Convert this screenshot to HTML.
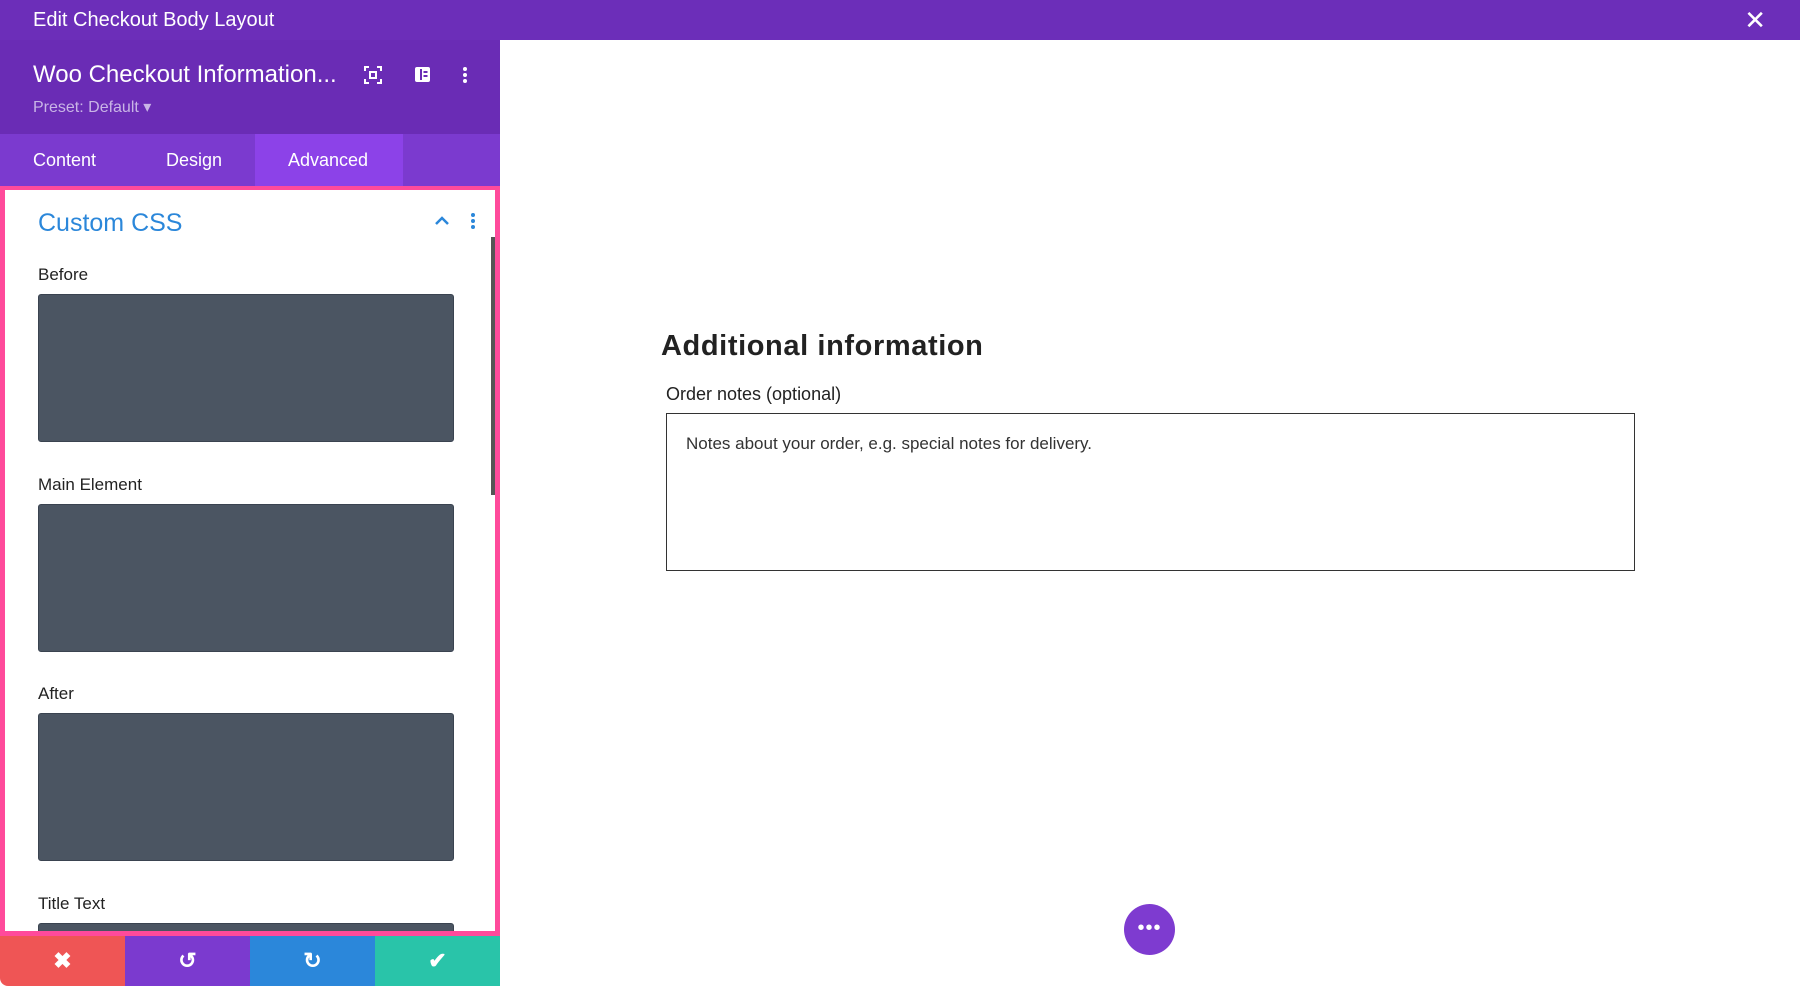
<!DOCTYPE html>
<html style="overflow:hidden;height:986px"><head><meta charset="utf-8"><style>
*{box-sizing:border-box;margin:0;padding:0}
body{width:1800px;height:986px;overflow:hidden;background:#fff;font-family:"Liberation Sans",sans-serif;position:relative}
.top{position:absolute;left:0;top:0;width:1800px;height:40px;background:#6c2eb9;color:#fff;font-size:20px;line-height:40px;padding-left:33px}
.close{position:absolute;right:34px;top:0;font-size:26px;color:#fff}
.hdr{position:absolute;left:0;top:40px;width:500px;height:94px;background:#6a2cb5;color:#fff}
.hdr .t{position:absolute;left:33px;top:21px;font-size:24px}
.hdr .p{position:absolute;left:33px;top:57px;font-size:16px;color:#c9b5e6}
.tabs{position:absolute;left:0;top:134px;width:500px;height:52px;background:#7b3acf;color:#fff;font-size:18px}
.tabs span{position:absolute;top:16px}
.tabs .act{position:absolute;left:255px;top:0;width:148px;height:52px;background:#8c42e8}
.panel{position:absolute;left:0;top:186px;width:500px;height:750px;border:5px solid #ff4a9b;border-top-width:4px;background:#fff;overflow:hidden}
.cc{position:absolute;left:33px;top:19px;font-size:25px;color:#2b87da}
.lbl{position:absolute;left:33px;font-size:17px;color:#222}
.box{position:absolute;left:33px;width:416px;height:148px;background:#4b5562;border:1px solid #3a4350;border-radius:3px}
.sb{position:absolute;left:486px;top:47px;width:4px;height:258px;background:#555}
.btns{position:absolute;left:0;top:936px;width:500px;height:50px;display:flex}
.btns div{flex:1;display:flex;align-items:center;justify-content:center;color:#fff;font-size:22px;font-weight:bold}
h2{position:absolute;left:661px;top:330px;font-size:29px;font-weight:bold;color:#222;letter-spacing:0.6px}
.on{position:absolute;left:666px;top:384px;font-size:18px;color:#222}
.ta{position:absolute;left:666px;top:413px;width:969px;height:158px;border:1px solid #333}
.ta span{position:absolute;left:19px;top:20px;font-size:17px;color:#333}
.fab{position:absolute;left:1124px;top:904px;width:51px;height:51px;border-radius:50%;background:#7e3bd0;color:#fff;text-align:center;font-size:20px;line-height:48px;letter-spacing:1px}
</style></head><body>
<div class="top">Edit Checkout Body Layout<span class="close">✕</span></div>
<div class="hdr"><div class="t">Woo Checkout Information...</div>
<svg style="position:absolute;left:364px;top:26px" width="18" height="18" viewBox="0 0 18 18" fill="none" stroke="#fff" stroke-width="2"><path d="M1 5V1h4M13 1h4v4M17 13v4h-4M5 17H1v-4"/><rect x="6" y="6" width="6" height="6"/></svg>
<svg style="position:absolute;left:414px;top:26px" width="17" height="17" viewBox="0 0 17 17"><rect x="1" y="1" width="15" height="15" rx="2" fill="#fff"/><rect x="6" y="3" width="2" height="11" fill="#6a2cb5"/><rect x="9.5" y="5" width="4" height="2" fill="#6a2cb5"/><rect x="9.5" y="9" width="4" height="2" fill="#6a2cb5"/></svg>
<svg style="position:absolute;left:462px;top:26px" width="6" height="18"><circle cx="3" cy="3" r="2" fill="#fff"/><circle cx="3" cy="9" r="2" fill="#fff"/><circle cx="3" cy="15" r="2" fill="#fff"/></svg>
<div class="p">Preset: Default ▾</div></div>
<div class="tabs"><div class="act"></div><span style="left:33px">Content</span><span style="left:166px">Design</span><span style="left:288px">Advanced</span></div>
<div class="panel">
<div class="cc">Custom CSS</div>
<svg style="position:absolute;left:430px;top:26px" width="14" height="10"><path d="M1 8l6-6 6 6" stroke="#2b87da" stroke-width="2.5" fill="none"/></svg>
<svg style="position:absolute;left:465px;top:22px" width="6" height="18"><circle cx="3" cy="3" r="2" fill="#2b87da"/><circle cx="3" cy="9" r="2" fill="#2b87da"/><circle cx="3" cy="15" r="2" fill="#2b87da"/></svg>
<div class="sb"></div>
<div class="lbl" style="top:75px">Before</div><div class="box" style="top:104px"></div>
<div class="lbl" style="top:285px">Main Element</div><div class="box" style="top:314px"></div>
<div class="lbl" style="top:494px">After</div><div class="box" style="top:523px"></div>
<div class="lbl" style="top:704px">Title Text</div><div class="box" style="top:733px"></div>
</div>
<div class="btns"><div style="background:#ef5555;border-bottom-left-radius:8px">✖</div><div style="background:#7b3acf">↺</div><div style="background:#2b87da">↻</div><div style="background:#29c4a9">✔</div></div>
<h2>Additional information</h2>
<div class="on">Order notes (optional)</div>
<div class="ta"><span>Notes about your order, e.g. special notes for delivery.</span></div>
<div class="fab">•••</div>
</body></html>
